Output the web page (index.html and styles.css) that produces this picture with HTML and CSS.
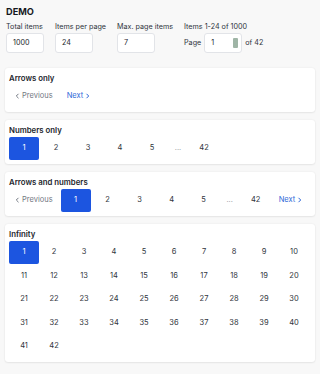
FILE: index.html
```html
<!DOCTYPE html>
<html lang="en">
<head>
  <meta charset="UTF-8">
  <meta name="viewport" content="width=device-width, initial-scale=1.0">
  <title>Pagination Demo</title>
  <link rel="stylesheet" href="styles.css">
</head>
<body>
<div class="container">
  <h1>DEMO</h1>
  <div class="controls">
    <div class="field">
      <label>Total items</label>
      <div class="input">1000</div>
    </div>
    <div class="field">
      <label>Items per page</label>
      <div class="input">24</div>
    </div>
    <div class="field">
      <label>Max. page items</label>
      <div class="input">7</div>
    </div>
    <div class="field">
      <label>Items 1-24 of 1000</label>
      <div class="page-row">
        <span>Page</span>
        <div class="input page-input">1<span class="spinner"></span></div>
        <span>of 42</span>
      </div>
    </div>
  </div>

  <div class="card">
    <h2>Arrows only</h2>
    <div class="pager">
      <span class="arrow disabled"><svg width="5" height="6" viewBox="0 0 5 6"><polyline points="3.5 0.8 1.3 3 3.5 5.2" fill="none" stroke="currentColor" stroke-width="1"/></svg>Previous</span>
      <span class="arrow next">Next<svg width="5" height="6" viewBox="0 0 5 6"><polyline points="1.5 0.8 3.7 3 1.5 5.2" fill="none" stroke="currentColor" stroke-width="1"/></svg></span>
    </div>
  </div>

  <div class="card">
    <h2>Numbers only</h2>
    <div class="pager">
      <span class="page active">1</span>
      <span class="page">2</span>
      <span class="page">3</span>
      <span class="page">4</span>
      <span class="page">5</span>
      <span class="dots">...</span>
      <span class="page">42</span>
    </div>
  </div>

  <div class="card">
    <h2>Arrows and numbers</h2>
    <div class="pager">
      <span class="arrow disabled"><svg width="5" height="6" viewBox="0 0 5 6"><polyline points="3.5 0.8 1.3 3 3.5 5.2" fill="none" stroke="currentColor" stroke-width="1"/></svg>Previous</span>
      <span class="page active">1</span>
      <span class="page">2</span>
      <span class="page">3</span>
      <span class="page">4</span>
      <span class="page">5</span>
      <span class="dots">...</span>
      <span class="page">42</span>
      <span class="arrow next">Next<svg width="5" height="6" viewBox="0 0 5 6"><polyline points="1.5 0.8 3.7 3 1.5 5.2" fill="none" stroke="currentColor" stroke-width="1"/></svg></span>
    </div>
  </div>

  <div class="card">
    <h2>Infinity</h2>
    <div class="infinity">
      <span class="page active">1</span>
      <span class="page">2</span>
      <span class="page">3</span>
      <span class="page">4</span>
      <span class="page">5</span>
      <span class="page">6</span>
      <span class="page">7</span>
      <span class="page">8</span>
      <span class="page">9</span>
      <span class="page">10</span>
      <span class="page">11</span>
      <span class="page">12</span>
      <span class="page">13</span>
      <span class="page">14</span>
      <span class="page">15</span>
      <span class="page">16</span>
      <span class="page">17</span>
      <span class="page">18</span>
      <span class="page">19</span>
      <span class="page">20</span>
      <span class="page">21</span>
      <span class="page">22</span>
      <span class="page">23</span>
      <span class="page">24</span>
      <span class="page">25</span>
      <span class="page">26</span>
      <span class="page">27</span>
      <span class="page">28</span>
      <span class="page">29</span>
      <span class="page">30</span>
      <span class="page">31</span>
      <span class="page">32</span>
      <span class="page">33</span>
      <span class="page">34</span>
      <span class="page">35</span>
      <span class="page">36</span>
      <span class="page">37</span>
      <span class="page">38</span>
      <span class="page">39</span>
      <span class="page">40</span>
      <span class="page">41</span>
      <span class="page">42</span>
    </div>
  </div>
</div>
</body>
</html>
```

FILE: styles.css
```css
:root {
  --primary-color: #1c55e0;
  --link-color: #2f68d8;
  --text-color: #2f343c;
  --muted-color: #737882;
  --border-color: #e2e4e8;
}

body {
  font-family: Inter, 'Noto Sans', sans-serif;
  font-size: 7.5px;
  line-height: 1.4;
  margin: 0;
  padding: 0;
  color: var(--text-color);
  background-color: #f8f8f8;
}

.container {
  padding: 6px 5px;
}

h1 {
  margin: 0 0 0 1px;
  font-size: 9.2px;
  font-weight: 700;
  line-height: 12px;
  color: #16191e;
}

.controls {
  display: flex;
  gap: 11px;
  margin: 3px 0 15px 1px;
  font-size: 7.2px;
}

.field label {
  display: block;
  line-height: 11px;
  margin-bottom: 1px;
}

.input {
  box-sizing: border-box;
  width: 38px;
  height: 20px;
  padding: 0 6px;
  display: flex;
  align-items: center;
  background: white;
  border: 1px solid var(--border-color);
  border-radius: 3px;
  color: #22262c;
}

.page-row {
  display: flex;
  align-items: center;
  gap: 3px;
}

.page-input {
  justify-content: space-between;
  padding-right: 3px;
}

.spinner {
  width: 5px;
  height: 10px;
  background: #9fb5a6;
  border-radius: 1px;
}

.card {
  background: white;
  border-radius: 3px;
  box-shadow: 0 0 2px rgba(0, 0, 0, 0.08), 0 1px 2px rgba(0, 0, 0, 0.06);
  padding: 4px 4px;
  margin-top: 8px;
}

h2 {
  margin: 0;
  font-size: 7.8px;
  font-weight: 600;
  line-height: 12.5px;
  color: #22262c;
}

.pager {
  display: flex;
  gap: 2px;
}

.page, .dots, .arrow {
  height: 23.5px;
  display: flex;
  align-items: center;
  justify-content: center;
}

.page {
  width: 30px;
  border-radius: 2px;
}

.page.active {
  background-color: var(--primary-color);
  color: white;
}

.dots {
  width: 18px;
  color: #9a9ea6;
}

.arrow {
  padding: 0 6px;
  gap: 2px;
}

.arrow.disabled {
  color: var(--muted-color);
}

.arrow.next {
  color: var(--link-color);
}

.infinity {
  display: flex;
  flex-wrap: wrap;
}
```
